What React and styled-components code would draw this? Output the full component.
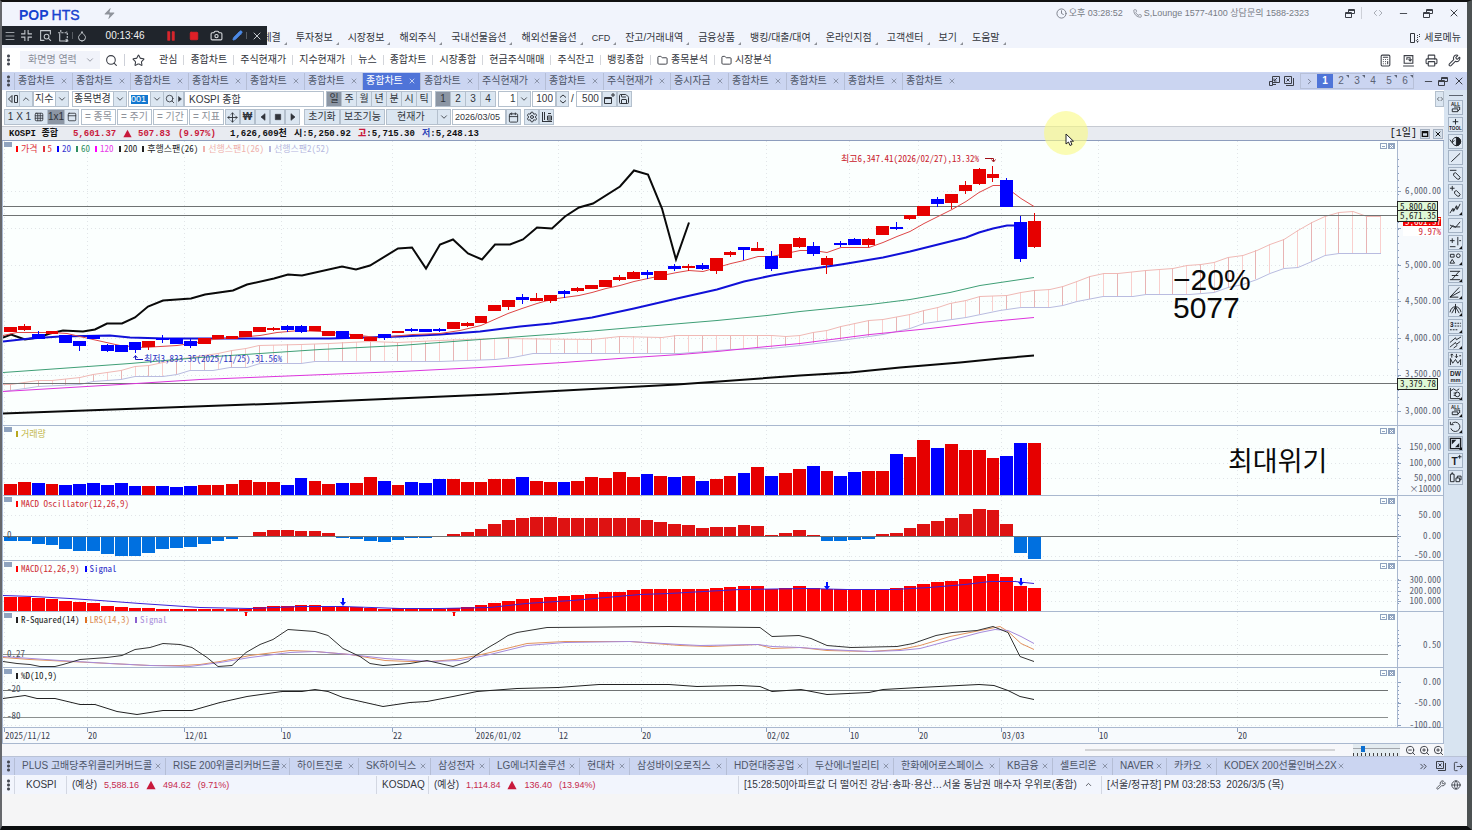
import React from "react";
import styled, { createGlobalStyle, css } from "styled-components";
import {
  Menu, Droplet, Camera, Pencil, X, Pause, Square, Zap, Clock, Phone,
  ChevronsLeftRight, ChevronDown, ChevronUp, ChevronRight, Search, Star, Folder, Calculator, Printer,
  Wrench, Save, Calendar, Settings, Move, ZoomIn, ZoomOut, ChevronsRight, LogOut, Globe, Minus,
  Grid3x3, PanelTop,
} from "lucide-react";

const ui = `"Liberation Sans", "Noto Sans CJK KR", sans-serif`;
const mono = `"Noto Sans Mono CJK KR", "Liberation Mono", "Noto Sans CJK KR", monospace`;

const Global = createGlobalStyle`
  * { box-sizing: border-box; }
  body { margin: 0; background: #111; }
  button, input, select { font: inherit; color: inherit; margin: 0; padding: 0; border: 0; background: none; border-radius: 0; }
  button { cursor: pointer; white-space: nowrap; }
  svg { display: block; flex: none; }
`;

const Page = styled.div`
  position: relative;
  display: flex;
  flex-direction: column;
  min-height: 100vh;
  overflow: hidden;
  border: 2px solid #111;
  border-left-color: #66686c;
  border-right: 5px solid #4c5152;
  border-bottom: 4px solid #0c0e10;
  background: #f5f5f6;
  color: #33363d;
  font-family: ${ui};
  font-size: 10px;
  line-height: 12px;
  white-space: nowrap;
`;

const Row = styled.div`
  display: flex;
  align-items: center;
  flex: none;
`;
const Spacer = styled.div`flex: 1;`;

/* title and menus */
const TitleBar = styled(Row).attrs({ as: "header" })`
  height: 24px;
  padding: 0 1px 2px 17px;
  background: #f1f4fc;
  color: #777b85;
`;
const Logo = styled.div`
  position: relative;
  display: flex;
  gap: 3px;
  margin-right: 23px;
  padding-top: 3px;
  color: #1743cf;
  font-size: 14px;
  line-height: 14px;
  b + span { -webkit-text-stroke: 0.4px #1743cf; }
  &::after {
    content: "";
    position: absolute;
    left: 12px;
    top: 9px;
    width: 6px;
    height: 2px;
    background: #f1f4fc;
    transform: rotate(-45deg);
  }
`;
const TitleNote = styled.span`
  display: flex;
  align-items: center;
  gap: 2px;
  margin-right: ${(p) => p.$gap}px;
  font-size: 9px;
`;
const IconButton = styled.button`
  display: flex;
  align-items: center;
  justify-content: center;
  width: ${(p) => p.$w || 25}px;
  height: 16px;
  margin-right: ${(p) => p.$mr || 0}px;
  color: ${(p) => p.$c || "#3b3e46"};
`;
const MenuBar = styled(Row).attrs({ as: "nav" })`
  height: 22px;
  gap: 15px;
  padding: 2px 6px 0 242px;
  background: #f1f4fc;
`;
const MenuItem = styled.button`
  position: relative;
  font-size: ${(p) => (p.$latin ? 9 : 10)}px;
  &::after {
    content: "";
    position: absolute;
    right: -6px;
    bottom: -1px;
    border: solid transparent;
    border-width: 0 0 3px 3px;
    border-bottom-color: #8d9097;
  }
`;
const SideMenuButton = styled.button`
  display: flex;
  align-items: center;
  gap: 3px;
`;
const Recorder = styled.div`
  position: absolute;
  z-index: 3;
  left: 0;
  top: 24px;
  display: flex;
  align-items: center;
  width: 265px;
  height: 19px;
  padding-left: 1px;
  background: #20252c;
  color: #c3c8cd;
  time { width: 68px; text-align: center; color: #f2f2f2; }
  i { width: 1px; height: 7px; background: #575c62; }
`;

/* favourites bar */
const FavBar = styled(Row)`
  height: 24px;
  padding: 0 1px 0 3px;
  background: #fff;
`;
const Grip = styled.span`
  width: 3px;
  height: 12px;
  margin: 0 ${(p) => p.$r}px 0 2px;
  background: radial-gradient(circle, #444852 1px, transparent 2px) 0 0 / 3px 4px;
`;
const ScreenSearch = styled.label`
  display: flex;
  align-items: center;
  width: 80px;
  height: 18px;
  margin-right: 5px;
  padding: 0 5px 0 8px;
  background: #f1f3fa;
  color: #898d98;
  input { width: 57px; outline: 0; }
  input::placeholder { color: #898d98; opacity: 1; }
`;
const FavItem = styled.button`
  display: flex;
  align-items: center;
  gap: 3px;
  height: 12px;
  padding: 0 6px;
  & + & { border-left: 1px solid #d3d5da; height: 10px; line-height: 10px; }
`;
const Divider = styled.span`
  width: 1px;
  height: 12px;
  margin: 0 ${(p) => p.$m}px;
  background: #cdd0d8;
`;

/* document tabs */
const TabBar = styled(Row)`
  height: ${(p) => p.$h || 18}px;
  padding-left: 3px;
  background: #cbd5f1;
  border-top: ${(p) => (p.$line ? "1px solid #b9c2d6" : "0")};
`;
const Tab = styled.div`
  display: flex;
  align-items: center;
  justify-content: space-between;
  flex: none;
  width: ${(p) => p.$w || 58}px;
  height: 17px;
  padding: 0 ${(p) => (p.$wide ? 3 : 4)}px 0 ${(p) => (p.$wide ? 7 : 3)}px;
  border-left: 1px solid #b5bed6;
  color: ${(p) => (p.$on ? "#fff" : "#4e5568")};
  background: ${(p) => (p.$on ? "#4f74d8" : "none")};
  svg { color: ${(p) => (p.$on ? "#fff" : "#6d7487")}; }
`;
const Desk = styled.button`
  position: relative;
  display: flex;
  align-items: center;
  justify-content: center;
  width: 16px;
  height: 14px;
  color: ${(p) => (p.$on ? "#fff" : "#5b6273")};
  background: ${(p) => (p.$on ? "#4f74d8" : "none")};
  font-weight: ${(p) => (p.$on ? 700 : 400)};
  ${(p) => p.$mark && css`
    &::after {
      content: "";
      position: absolute;
      right: 0;
      top: 1px;
      border: solid transparent;
      border-width: 3px 0 0 3px;
      border-top-color: #5b6273;
    }
  `}
`;
const DeskGroup = styled.div`
  display: flex;
  border: 1px solid #b7c0d8;
  margin: 0 7px 0 4px;
`;

/* chart window */
const Body = styled.main`
  display: flex;
  flex: none;
`;
const ChartWindow = styled.section`
  flex: 1;
  min-width: 0;
  background: #fff;
`;
const Tools = styled(Row)`
  height: 16px;
  margin-top: ${(p) => p.$top}px;
  padding-left: ${(p) => p.$left}px;
  gap: 1px;
`;
const Group = styled.div`
  display: flex;
  margin-right: ${(p) => p.$mr || 2}px;
`;
const ToolButton = styled.button`
  display: flex;
  align-items: center;
  justify-content: center;
  gap: 3px;
  width: ${(p) => p.$w || 15}px;
  height: 16px;
  border: 1px solid #b4c0cd;
  margin-left: -1px;
  background: ${(p) => (p.$on ? "#8c96a4" : p.$plain ? "#fff" : "#dbe6f1")};
  color: ${(p) => (p.$plain ? "#8d919a" : "#30343b")};
`;
const Field = styled.input`
  width: ${(p) => p.$w}px;
  height: 16px;
  padding: 0 ${(p) => p.$px || 4}px 1px;
  border: 1px solid #b4c0cd;
  background: #fff;
  text-align: ${(p) => p.$align || "left"};
`;
const CodeField = styled(Field)`
  background: linear-gradient(#1177d0, #1177d0) 2px 3px / 17px 9px no-repeat #fff;
  color: #fff;
  font-size: 9px;
`;
const DateField = styled(Field)`font-size: 9px;`;
const SelectBox = styled.span`
  position: relative;
  display: flex;
  width: ${(p) => p.$w}px;
  height: 16px;
  border: 1px solid #b4c0cd;
  background: linear-gradient(90deg, ${(p) => p.$bg || "#fff"} calc(100% - 13px), #b4c0cd 0, #b4c0cd calc(100% - 12px), #dbe6f1 0);
  select { appearance: none; width: 100%; padding-left: ${(p) => p.$pl || 1}px; outline: 0; }
  svg { position: absolute; right: 1px; top: 2px; pointer-events: none; }
`;
const Slash = styled.span`margin: 0 1px;`;

const Quote = styled(Row)`
  height: 15px;
  margin-top: 1px;
  padding: 0 1px 0 7px;
  gap: 6px;
  border-top: 1px solid #c6cad2;
  border-bottom: 1px solid #8d9dbd;
  background: #e8ebf1;
  color: #111;
  font-family: "Liberation Mono", "Noto Sans CJK KR", monospace;
  font-weight: 700;
  font-size: 9px;
  b { color: #c8193c; }
  em { font-style: normal; color: #2f46b8; }
`;
const QuotePart = styled.span`
  width: ${(p) => p.$w}px;
  color: ${(p) => (p.$up ? "#c8193c" : "#111")};
`;
const Period = styled.span`font-weight: 400; font-size: 10px;`;
const MiniButton = styled.button`
  display: flex;
  align-items: center;
  justify-content: center;
  width: 10px;
  height: 10px;
  margin-left: -3px;
  border: 1px solid #a4b0c0;
  background: #d5dfea;
`;

const Chart = styled.div`
  border-left: 1px solid #a9b8cf;
  border-right: 1px solid #a9b8cf;
`;
const Panel = styled.div`
  display: flex;
  height: ${(p) => p.$h}px;
  border-bottom: 1px solid #a9b8cf;
`;
const Plot = styled.div`
  position: relative;
  flex: 1;
  min-width: 0;
  background: #fbfffe;
  > svg { width: 100%; height: 100%; }
`;
const AxisBox = styled.div`
  width: 46px;
  flex: none;
  border-left: 1px solid #a9b8cf;
  background: #f7fafd;
  svg { width: 100%; height: 100%; overflow: visible; }
  text { font: 9px ${mono}; fill: #5a6070; text-anchor: end; }
`;
const Legend = styled.div`
  position: absolute;
  left: 13px;
  top: 2px;
  display: flex;
  gap: 5px;
  font: 9px/12px ${mono};
`;
const LegendItem = styled.span`
  display: flex;
  align-items: center;
  gap: 3px;
  color: ${(p) => p.$c};
  &::before { content: ""; width: 2px; height: 6px; background: ${(p) => p.$m || p.$c}; }
`;
const Fold = styled.button`
  position: absolute;
  left: 1px;
  top: 1px;
  width: 8px;
  height: 5px;
  background: #8fa3bf;
`;
const PanelButtons = styled.div`
  position: absolute;
  right: 2px;
  top: 2px;
  display: flex;
  gap: 1px;
  button { display: flex; align-items: center; justify-content: center; width: 7px; height: 6px; border: 1px solid #8fa3bf; color: #8fa3bf; }
  button + button { background: #8fa3bf; color: #fff; }
`;
const Level = styled.span`
  position: absolute;
  left: 4px;
  top: ${(p) => p.$y}px;
  font: 9px/12px ${mono};
  color: #4e535e;
`;
const Note = styled.span`
  position: absolute;
  left: ${(p) => p.$x}%;
  top: ${(p) => p.$y}px;
  font: 9px/12px ${mono};
  color: ${(p) => p.$c};
`;
const Memo = styled.div`
  position: absolute;
  left: ${(p) => p.$x}%;
  top: ${(p) => p.$y}px;
  font: ${(p) => p.$s}px/28px ${ui};
  color: #0a0a0a;
`;
const DateAxis = styled.div`
  height: 16px;
  background: #f7fafd;
  border-bottom: 1px solid #a9b8cf;
  padding-right: 46px;
  svg { width: 100%; height: 15px; }
  text { font: 9px ${mono}; fill: #3c4250; }
`;
const ScrollRow = styled(Row)`
  height: 12px;
  background: #f6f7fa;
  justify-content: flex-end;
  gap: 3px;
`;
const Track = styled.div`
  width: 250px;
  height: 2px;
  margin-right: 15px;
  background: #d2d3d6;
`;
const ZoomRange = styled.input.attrs({ type: "range" })`
  appearance: none;
  width: 47px;
  height: 12px;
  margin-right: 2px;
  background:
    linear-gradient(#a3a7ad, #a3a7ad) 0 4px / 100% 1px no-repeat,
    repeating-linear-gradient(90deg, #444 0 1px, transparent 1px 4px) 0 9px / 100% 3px no-repeat,
    #e3ebf0;
  &::-webkit-slider-thumb { appearance: none; width: 4px; height: 6px; margin-top: -3px; background: #0b6fd0; }
`;

/* drawing tools */
const SideTools = styled.aside`
  display: flex;
  flex-direction: column;
  align-items: center;
  width: 23px;
  flex: none;
  padding-top: 5px;
  background: #d8e4f1;
  hr { width: 14px; height: 1px; margin: 0 0 4px; border: 0; background: #5c6470; }
`;
const ToolStack = styled.div`
  display: flex;
  flex-direction: column;
  justify-content: space-between;
  height: 385px;
`;
const DrawTool = styled.button`
  position: relative;
  width: 15px;
  height: 15px;
  border: 1px solid #a3b2c4;
  background: #dfe9f4;
  svg { width: 13px; height: 13px; }
  ${(p) => p.$more && css`
    &::after {
      content: "";
      position: absolute;
      right: 0;
      bottom: 0;
      border: solid transparent;
      border-width: 0 0 3px 3px;
      border-bottom-color: #111;
    }
  `}
`;

/* status */
const Status = styled(Row).attrs({ as: "footer" })`
  height: 19px;
  padding: 0 4px 0 3px;
  background: #f2f5fd;
`;
const Cell = styled.div`
  display: flex;
  align-items: center;
  gap: 7px;
  width: ${(p) => p.$w}px;
  height: 18px;
  padding-left: ${(p) => p.$pl || 5}px;
  border-left: 1px solid #d3d7e2;
`;
const Up = styled.span`font-size: 9px; color: #c62a4d;`;
const Pointer = styled.div`
  position: absolute;
  z-index: 4;
  left: 1042px;
  top: 109px;
  width: 44px;
  height: 44px;
  border-radius: 50%;
  background: rgba(250, 250, 130, 0.6);
  svg { margin: 22px 0 0 21px; }
`;

/* ---- data ---- */
const LEFT = 3;
const WIDTH = 1394;
const bx = (i) => 10.5 + i * 13.838;
const RED = "#e60000";
const BLUE = "#0000ff";

/* colour, body top, body bottom, high, low */
const candles = [
  "r327,331", "r326,329,324,330", "b334,338,331,338", "r331,333", "b335,342", "b341,345,341,350", "b335,338", "b345,350,344,351",
  "b345,351", "b342,349,342,352", "r341,346,341,349", "b338,339,335,342", "b338,343", "b341,345,339,347", "r338,343", "r335,338",
  "r336,338", "r331,336", "r327,331", "r328,329,327,330", "b326,329,325,331", "b326,331,325,332", "r326,330", "r331,335",
  "b331,338", "r334,338", "r337,340", "b334,337,334,339", "r331,332", "b329,330,328,331", "b329,331", "b329,330,328,331",
  "r322,328", "r323,325,322,326", "r316,322", "r305,310", "r300,306,300,309", "b297,299,294,303", "r298,300,293,300", "r295,300,295,302",
  "b291,293,290,297", "r288,290,287,291", "r285,288", "r280,286", "r277,279,275,280", "r272,278,271,278", "b272,274,270,278", "r271,279",
  "b266,268,264,270", "r266,267,264,270", "b265,268,263,269", "r258,270,258,273", "r252,254,251,256", "b247,249,247,259", "r248,250,242,250", "b256,268,251,270",
  "r244,257", "r238,246,237,247", "b246,253,242,255", "r258,264,256,273", "b243,244,241,246", "b239,244,238,244", "r239,244,238,246", "r226,234",
  "b227,228,222,229", "r215,218,215,219", "r206,215", "b199,203,197,206", "r194,202,194,208", "r185,190,181,193", "r169,183,168,184", "r174,177,166,181",
  "b180,206,178,206", "b222,258,216,261", "r221,246,213,247",
].map((s) => {
  const [top, bottom, hi, lo] = s.slice(1).split(",").map(Number);
  return { color: s[0] === "r" ? RED : BLUE, top, bottom, hi: hi ?? top, lo: lo ?? bottom };
});

const volume = [
  484, 482, 483, 484, 485, 484, 483, 485, 483, 486, 486, 486, 487, 486, 485, 485, 484, 480, 482, 482, 485, 478, 481, 484, 483, 483, 477, 481, 485, 482, 483, 479, 479, 482, 482,
  479, 479, 477, 481, 482, 482, 481, 477, 478, 472, 477, 474, 476, 477, 476, 481, 479, 476, 473, 467, 476, 473, 469, 466, 471, 476, 472, 471, 471, 454, 457, 440, 448, 444, 450, 450, 458, 456, 443, 443,
];
const oscillator = [
  541, 541, 544, 545, 549, 551, 551, 554, 556, 556, 553, 549, 548, 547, 544, 541, 539, 536, 532, 530, 530, 531, 531, 533, 538, 539, 541, 542, 540, 538, 538, 537, 534, 532, 529,
  524, 520, 518, 517, 517, 518, 518, 518, 518, 518, 518, 520, 522, 524, 525, 528, 527, 527, 525, 526, 535, 533, 530, 535, 541, 541, 540, 539, 534, 533, 528, 524, 521, 518, 514, 509, 510, 524, 553, 559,
];
const macd = [
  597, 597, 598, 599, 601, 602, 603, 606, 607, 608, 608, 609, 609, 609, 609, 609, 609, 609, 607, 606, 606, 605, 605, 606, 607, 607, 608, 609, 608, 608, 608, 609, 608, 607, 605,
  603, 601, 599, 598, 597, 596, 595, 594, 592, 592, 590, 589, 589, 589, 589, 589, 588, 587, 586, 586, 589, 588, 586, 588, 589, 589, 589, 589, 589, 588, 586, 584, 582, 581, 579, 576, 574, 577, 586, 588,
];

const lines = {
  ma5: "3,335 17,332 33,332 53,332 67,333 93,339 120,345 143,347 177,345 197,342 213,339 237,337 260,335 277,332 300,330 320,331 343,333 360,335 377,337 390,336 413,334 440,333 460,330 481,325 508,313 522,308 537,303 551,299 564,297 579,295 592,292 606,288 620,285 634,281 648,278 662,275 677,272 689,270 703,271 717,267 731,263 744,260 758,256 772,256 786,253 800,250 813,250 827,252 841,247 869,247 883,242 897,236 910,231 924,223 938,216 952,209 966,201 979,192 993,185 1002,185 1013,192 1021,198 1034,206",
  ma20: "3,341 30,338 60,336 110,335 130,337 165,338 230,338 300,338 330,338 400,336 440,334 480,331 520,326 551,323 592,317 634,308 677,298 717,289 744,281 772,275 800,270 841,264 883,257 910,251 938,244 966,237 979,232 993,228 1007,225 1027,225",
  ma60: "3,372 60,368 130,363 200,357 260,353 320,349 400,345 480,339 563,333 633,327 717,320 767,315 800,311 870,304 910,299 950,292 980,285 1007,281 1034,277",
  ma120: "3,391 120,384 200,379 300,375 400,371 480,367 563,362 633,357 680,354 717,351 757,347 800,343 870,334 930,328 980,322 1034,317",
  ma200: "3,413 140,408 280,403 350,400 420,397 490,394 677,384 800,375 850,372 900,367 960,362 1000,358 1034,355",
  lagging: "3,337 11,334 25,339 38,337 50,333 63,330 83,331 95,329 107,323 122,323 135,317 148,306 163,300 191,298 205,294 233,290 247,284 274,278 288,274 302,275 342,266 356,269 370,265 398,248 412,247 426,268 440,244 453,239 468,253 482,259 495,244 510,244 523,239 537,227 552,228 565,216 579,207 593,203 620,186 634,170 648,174 662,208 676,259 689,222",
  spanA: "3,384 11,384 24,382 38,380 52,380 80,377 93,374 121,370 135,366 149,365 163,362 177,359 218,353 232,350 246,348 259,345 301,344 329,343 370,341 398,342 439,340 467,339 495,338 592,339 620,336 662,337 677,335 772,335 786,336 800,335 813,332 827,330 841,326 855,323 869,320 883,319 910,314 924,310 938,307 950,303 966,300 980,296 1007,295 1021,292 1034,290 1050,289 1063,286 1077,281 1090,276 1104,273 1118,273 1146,270 1173,268 1187,265 1201,264 1214,262 1228,257 1243,255 1257,250 1270,244 1284,239 1298,230 1312,222 1325,216 1339,212 1353,211 1367,216 1381,216",
  spanB: "3,391 25,388 38,386 80,384 93,381 121,379 135,376 163,376 177,374 190,370 213,370 230,367 247,367 260,363 301,363 315,361 440,361 467,360 495,359 513,357 533,353 680,353 730,349 770,348 800,345 841,340 883,334 910,328 924,323 966,317 1000,310 1021,307 1050,307 1063,305 1077,301 1103,296 1133,296 1146,294 1190,294 1214,292 1228,287 1243,284 1257,279 1270,273 1284,268 1298,267 1312,261 1325,255 1339,253 1381,253",
  macdSignal: "3,595 33,596 70,598 100,600 140,603 170,605 200,607 250,608 300,606 343,606 400,608 440,608 490,607 526,603 572,600 640,594 669,593 704,591 740,589 808,588 847,589 894,589 929,587 965,584 990,581 1015,581 1034,583",
  rsq: "3,661 17,663 30,664 40,666 55,666 63,664 80,659 107,657 122,655 135,649 150,647 163,643 180,644 192,647 207,657 218,666 232,665 246,652 260,644 273,639 288,629 315,631 328,635 343,648 360,656 370,663 383,665 410,663 427,660 453,666 468,661 477,654 490,646 497,642 508,635 517,632 547,627 669,626 760,627 772,636 799,635 811,638 827,645 851,647 897,646 913,643 936,635 952,632 977,630 993,626 1008,632 1020,656 1034,661",
  lrs: "3,657 30,659 70,661 110,663 150,665 180,665 200,664 220,661 250,655 290,650 315,651 350,654 385,660 410,661 430,661 455,659 477,655 490,652 527,643 565,641 630,641 680,645 710,646 758,644 772,648 800,647 827,650 870,651 900,649 920,645 950,636 980,630 1000,626 1008,631 1021,643 1034,649",
  lrsSignal: "3,656 60,660 110,663 150,665 190,666 220,662 250,657 290,652 315,651 350,654 385,658 430,661 460,660 490,654 527,645 565,642 630,641 680,644 700,645 758,644 772,646 800,647 827,649 870,651 900,650 920,648 950,640 980,632 995,629 1008,630 1021,636 1034,643",
  percentD: "3,698 25,695 37,698 55,698 80,704 95,704 117,711 137,714 163,710 192,710 220,702 247,696 282,691 302,691 315,689 328,691 343,697 383,706 410,702 427,701 453,696 477,691 490,690 517,688 558,687 599,684 669,684 697,686 740,685 760,686 772,691 801,689 827,694 869,692 883,689 919,687 979,684 994,685 1008,690 1020,696 1034,699",
};

const toPoints = (s) => s.split(" ").map((p) => p.split(",").map(Number));
const valueAt = (s, x) => {
  const pts = toPoints(s);
  const k = pts.findIndex((p) => p[0] >= x);
  if (k <= 0) return pts[k === 0 ? 0 : pts.length - 1][1];
  const [x0, y0] = pts[k - 1];
  const [x1, y1] = pts[k];
  return y0 + ((y1 - y0) * (x - x0)) / (x1 - x0);
};

const dates = [[4, "2025/11/12"], [87, "20"], [184, "12/01"], [281, "10"], [392, "22"], [475, "2026/01/02"], [558, "12"], [641, "20"], [766, "02/02"], [849, "10"], [918, "20"], [1001, "03/03"], [1098, "10"], [1237, "20"]];

/* ---- chart pieces ---- */
const Line = ({ d, c, w = 1 }) => (
  <polyline points={d} transform="translate(0 .5)" fill="none" stroke={c} strokeWidth={w} vectorEffect="non-scaling-stroke" />
);
const HLine = ({ y, to = 1397, c = "#6f7373" }) => <rect x={LEFT} y={y} width={to - LEFT} height="1" fill={c} />;

function PanelView({ top, h, legend, grid = [], labels = [], minor = 5, children, overlay, axis }) {
  return (
    <Panel $h={h}>
      <Plot>
        <svg viewBox={`${LEFT} ${top} ${WIDTH} ${h - 1}`} preserveAspectRatio="none">
          <g stroke="#e1e5e8" strokeDasharray="1 3" shapeRendering="crispEdges">
            {dates.map(([x]) => <line key={x} x1={x + 0.5} x2={x + 0.5} y1={top} y2={top + h} />)}
            {grid.map((y) => <line key={y} x1={LEFT} x2="1397" y1={y + 0.5} y2={y + 0.5} />)}
          </g>
          {children}
        </svg>
        <Fold aria-label="접기" />
        <Legend>{legend.map(([t, c, m]) => <LegendItem key={t} $c={c} $m={m}>{t}</LegendItem>)}</Legend>
        {overlay}
        <PanelButtons>
          <button aria-label="최소화"><svg width="3" height="1"><rect width="3" height="1" fill="currentColor" /></svg></button>
          <button aria-label="닫기"><svg width="3" height="3"><path d="M0 0L3 3M3 0L0 3" stroke="currentColor" /></svg></button>
        </PanelButtons>
      </Plot>
      <AxisBox>
        <svg viewBox={`1398 ${top} 45 ${h - 1}`}>
          <g fill="#8ba0bf">
            {grid.map((y) => <rect key={y} x="1398" y={y} width="3" height="1" />)}
            {Array.from({ length: Math.floor((h - 22) / minor) }, (_, k) => (
              <rect key={k} x="1398" y={top + 18 + k * minor} width="1" height="1" />
            ))}
          </g>
          {labels.map(([y, t]) => <text key={t} x="1441" y={y + 3}>{t}</text>)}
          {axis}
        </svg>
      </AxisBox>
    </Panel>
  );
}

const Tag = ({ y, t }) => (
  <g>
    <rect x="1397.5" y={y + 0.5} width="40" height="11" fill="#dff8d6" stroke="#222" />
    <text x="1436" y={y + 9} style={{ fill: "#222" }}>{t}</text>
  </g>
);

const Bars = ({ data, base, color, w = 12.8 }) =>
  data.map((y, i) => (
    <rect key={i} x={bx(i) - w / 2} y={Math.min(y, base)} width={w} height={Math.max(1, Math.abs(base - y))} fill={color(i, y)} />
  ));

const DownArrow = ({ x, y }) => <path d={`M${x - 1} ${y - 4}h2v4h2l-3 4l-3-4h2z`} fill="#0010ff" />;
const UpMark = ({ x }) => <path d={`M${x - 3} 611h6l-2 2v3h-2v-3z`} fill="#f00" />;

function Charts() {
  const cloudX = Array.from({ length: 100 }, (_, i) => bx(i)).filter((x) => x < 1383);
  const pct = (x) => ((x - LEFT) / WIDTH) * 100;
  return (
    <Chart>
      <PanelView
        top={141} h={285} minor={7}
        legend={[["가격", "#e0303a", "#f00"], ["5", "#e0303a"], ["20", "#3434d0", "#00f"], ["60", "#2f8f63"], ["120", "#e93be9", "#f0f"], ["200", "#222"], ["후행스팬(26)", "#222"], ["선행스팬1(26)", "#efb1ac"], ["선행스팬2(52)", "#b6b8df"]]}
        grid={[191, 228, 265, 301, 338, 375, 411]}
        labels={[[191, "6,000.00"], [265, "5,000.00"], [301, "4,500.00"], [338, "4,000.00"], [374, "3,500.00"], [411, "3,000.00"]]}
        axis={
          <>
            <rect x="1403" y="217" width="38" height="9" fill="#f00000" />
            <text x="1441" y="225" style={{ fill: "#fff" }}>5,601.37</text>
            <rect x="1403" y="226" width="38" height="10" fill="#fff" />
            <text x="1441" y="235" style={{ fill: "#d02030" }}>9.97%</text>
            <Tag y={201} t="5,800.60" />
            <Tag y={210} t="5,671.35" />
            <Tag y={378} t="3,379.78" />
          </>
        }
        overlay={
          <>
            <Note $x={pct(841)} $y={12} $c="#c9202c">최고6,347.41(2026/02/27),13.32%</Note>
            <Note $x={pct(144)} $y={212} $c="#2f37c4">최저3,833.35(2025/11/25),31.56%</Note>
            <Memo $x={pct(1173)} $y={125} $s={30}>−20%<br />5077</Memo>
          </>
        }
      >
        <g shapeRendering="crispEdges">
          {cloudX.map((x, i) => (
            <line key={x} x1={x} x2={x} y1={valueAt(lines.spanA, x)} y2={valueAt(lines.spanB, x)} stroke={i % 2 ? "#f9cfcd" : "#e8b4b4"} />
          ))}
        </g>
        <Line d={lines.spanA} c="#f0b9b5" />
        <Line d={lines.spanB} c="#b9bce0" />
        <HLine y={206} /><HLine y={215} /><HLine y={383} />
        <Line d={lines.ma60} c="#3f9f76" />
        <Line d={lines.ma120} c="#dd35dd" />
        <Line d={lines.ma200} c="#0a0a0a" w={2} />
        <Line d={lines.lagging} c="#0a0a0a" w={2} />
        <Line d={lines.ma20} c="#1111d8" w={2} />
        <Line d={lines.ma5} c="#de4646" />
        <g shapeRendering="crispEdges">
          {candles.map((k, i) => (
            <g key={i} fill={k.color}>
              <rect x={bx(i) - 0.5} y={k.hi} width="1" height={k.lo - k.hi + 1} />
              <rect x={bx(i) - 6.4} y={k.top} width="12.8" height={Math.max(1, k.bottom - k.top + 1)} />
            </g>
          ))}
        </g>
        <path d="M985 158.500H993.500V161M991.500 159.500L993.500 162L995.500 159.500" fill="none" stroke="#a01018" />
        <path d="M143 359.500H135.500V356M133.500 358L135.500 355.500L137.500 358" fill="none" stroke="#1818c0" />
      </PanelView>

      <PanelView top={426} h={70} minor={3} legend={[["거래량", "#c3b84c", "#b9a81e"]]} grid={[448, 463, 478]}
        labels={[[447, "150,000"], [463, "100,000"], [478, "50,000"], [489, "×10000"]]}
        overlay={<Memo $x={pct(1228)} $y={22} $s={27}>최대위기</Memo>}>
        <g shapeRendering="crispEdges"><Bars data={volume} base={495} color={(i) => candles[i].color} /></g>
      </PanelView>

      <PanelView top={496} h={65} minor={4} legend={[["MACD Oscillator(12,26,9)", "#cf2f37", "#f00"]]} grid={[515, 536, 556]}
        labels={[[515, "50.00"], [536, "0.00"], [555, "-50.00"]]} overlay={<Level $y={33}>0</Level>}>
        <g shapeRendering="crispEdges"><Bars data={oscillator} base={536} color={(i, y) => (y <= 536 ? "#de1212" : "#0070e0")} /></g>
        <HLine y={536} />
      </PanelView>

      <PanelView top={561} h={51} minor={4} legend={[["MACD(12,26,9)", "#cf2f37", "#f00"], ["Signal", "#2a2ac8", "#00f"]]} grid={[580, 591, 601]}
        labels={[[580, "300.000"], [591, "200.000"], [601, "100.000"]]}>
        <g shapeRendering="crispEdges"><Bars data={macd} base={611} color={() => "#fe0000"} /></g>
        <Line d={lines.macdSignal} c="#3c22d8" />
        <DownArrow x={343} y={602} /><DownArrow x={827} y={586} /><DownArrow x={1021} y={582} />
      </PanelView>

      <PanelView top={612} h={56} minor={4} legend={[["R-Squared(14)", "#222"], ["LRS(14,3)", "#dd8d55", "#e07020"], ["Signal", "#a98fdb", "#8a60d0"]]}
        grid={[645]} labels={[[645, "0.50"]]} overlay={<Level $y={36}>0.27</Level>}>
        <UpMark x={246} /><UpMark x={454} />
        <HLine y={654} to={1388} c="#8b908f" />
        <Line d={lines.lrs} c="#e3935f" />
        <Line d={lines.lrsSignal} c="#a68bdc" />
        <Line d={lines.rsq} c="#333" />
      </PanelView>

      <PanelView top={668} h={60} minor={4} legend={[["%D(10,9)", "#222"]]} grid={[682, 703, 725]}
        labels={[[682, "0.00"], [703, "-50.00"], [725, "-100.00"]]}
        overlay={<><Level $y={15}>-20</Level><Level $y={42}>-80</Level></>}>
        <HLine y={690} to={1388} /><HLine y={717} to={1388} c="#8b908f" />
        <Line d={lines.percentD} c="#222" />
      </PanelView>

      <DateAxis>
        <svg>
          {dates.map(([x, t]) => (
            <g key={x}>
              <rect x={`${pct(x)}%`} y="0" width="1" height="4" fill="#8ba0bf" />
              <text x={`${pct(x + 1)}%`} y="11">{t}</text>
            </g>
          ))}
        </svg>
      </DateAxis>
    </Chart>
  );
}

/* ---- icons ---- */
const S = ({ s = 12, children, w = 1, ...r }) => (
  <svg width={s} height={s} viewBox="0 0 12 12" fill="none" stroke="currentColor" strokeWidth={w} {...r}>{children}</svg>
);
const Restore = () => <S><path d="M1.500 5.500h6v5h-6zM1.500 6.500h6M4.500 5V2.500h6v4H8M4.500 3.500h6" /></S>;
const PanIcon = () => <S><path d="M5 2.500L1.500 6L5 9.500zM7.500 2.500h3v7h-3z" /></S>;
const Boxed = () => <S><path d="M1.500 1.500h7v7h-7zM3.500 3.500l3 3M6.500 3.500l-3 3M10.500 3v7.500H3" /></S>;
const Dock = () => <S><path d="M4.500 1.500h7v6h-7zM9 3L6 6M6 3.500V6h2.500M1.500 6.500h3v4h-3zM4 9.500h4" /></S>;
const NewWin = () => <S><path d="M1.500 4.500h7v6h-7zM1.500 5.500h7M10 0v4M8 2h4" /></S>;
const ChartMini = () => <S><path d="M1.500 1v9.500M3.500 1v8M1 10.500h10M6.500 5h4v4h-4zM6.500 7h4M7 2.500h3" /></S>;
const Screen = () => <S s={13}><path d="M2 1.500h8v7H2zM1 11h10M4.500 5.500V3.500h3v2M6 5l1.500 1.500L9 5" /></S>;
const SearchBox = () => <S s={13}><path d="M5 10.500H1.500v-9h9V5" /><circle cx="7" cy="7" r="2.200" /><path d="M8.500 8.500L11 11" /></S>;
const Region = () => <S s={13}><path d="M1 3.500h8V2M3.500 1v3M9.500 3.500v7" strokeDasharray="2 1" /><path d="M2.500 4v7h7M8 9.500l2 1.500l-2 1" /></S>;
const Collapse = () => <S s={13}><path d="M4.500 1v3.500H1M7.500 1v3.500H11M4.500 11V7.500H1M7.500 11V7.500H11" /></S>;
const Vertical = () => <S><path d="M1.500 1.500h4v9h-4z" /><path d="M8.500 3v7M7 8l1.500 2.500L10 8M10.500 2v4" strokeDasharray="1 1" /></S>;
const UpTriangle = ({ s = 10 }) => <S s={s}><path d="M6 1L11.500 11H.5z" fill="#c8193c" stroke="none" /></S>;

const G = ({ children, w = 1 }) => <svg viewBox="0 0 14 14" fill="none" stroke="#1c2026" strokeWidth={w}>{children}</svg>;
const T = ({ x = 7, y, s = 5, children }) => (
  <text x={x} y={y} fontSize={s} fontWeight="700" textAnchor="middle" fill="#1c2026" stroke="none">{children}</text>
);
const Stack = () => <G><T y="5">ALL</T><path d="M5.500 6.500h6v3M3.500 8.500h6v3h-6zM9.500 11l2-2" /></G>;
const drawTools = [
  [<Stack />], [<G><T y="13">TOOL</T><path d="M7 1v6M4 4h6" /></G>],
  [<G><circle cx="8" cy="7" r="4.500" /><path d="M8 2.500a4.500 4.500 0 0 1 0 9z" fill="#1c2026" /><path d="M1 5l2 3l3-2" /></G>],
  [<G><path d="M2.500 11.500L12 2.500" /></G>],
  [<G><path d="M1 2.500h7M5 6l2-1l5 5l-1 2l-2 0l-4-4z" /></G>],
  [<G><path d="M1 3.500h5M3.500 1v5M6 7l2-1l4 4l-1 2h-2l-3-3z" /></G>],
  [<G><path d="M1 12l3-5l1 3l3-6l1 4l3-6M4 10l1-3M8 8l1-3" /></G>, 1],
  [<G><path d="M1 11l3-4l3 2l5-6M1 6.500l4 2l7 0" /></G>],
  [<G><path d="M1 5h5M3.500 2.500v5M9.500 1v9M11 5h2M1 11.500h6" /></G>, 1],
  [<G><path d="M1.500 2.500h4v3h-4zM3.500 8L6 12H1z" /><circle cx="10" cy="4" r="2" /></G>, 1],
  [<G><path d="M1 2.500h11M3 7h7M1 11.500h11M11 2.500L3 11.500" /></G>, 1],
  [<G><path d="M1 12L11 1.500M1 12l11-6M1 12h9" /></G>, 1],
  [<G><path d="M1 10c1-4 3-6 6-6s5 2 6 6M7 1v10M7 4l-4 7M7 4l4 7" /></G>, 1],
  [<G><T x="3" y="7" s="7">3</T><path d="M6 3.500h7M6 6.500h7M1 10.500h9" strokeDasharray="2 1" /></G>, 1],
  [<G><path d="M1 7l6-5l1 2l5-3M1 12l6-5l1 2l4-3M5 13l4-3" /></G>, 1],
  [<G><path d="M1.500 13V6l2.500 5l3-4l2.500 4l3-4v6M3 5V1M1.500 2.500L3 1l1.500 1.500M8 1v4M6.500 3.500L8 5l1.500-1.500M11 3h2" /></G>],
  [<G><T y="6" s="7">DW</T><T y="12.500" s="6">mm</T></G>],
  [<G><path d="M1.500 1v11.500H12M2 4l3-2l3 2l3-2M5 6.500h3M5 9h2" /><circle cx="9" cy="8" r="2.500" /></G>, 1],
  [<Stack />, 1],
  [<G><path d="M3 4a5 5 0 1 1-1 5M1.500 2v3h3.500" /></G>, 1],
  [<G><path d="M1.500 1.500h11v11h-11z" strokeWidth="1.500" /><path d="M3 3h5L3 8zM11 11V6.500L6.500 11z" fill="#1c2026" stroke="none" /></G>, 1],
  [<G><T x="6" y="12" s="11">T</T><path d="M11.500 1v4M9.500 3h4" /></G>],
  [<G><path d="M1.500 11.500v-8h1.500v-1.500h1v1.500h1.500v8zM7.500 7.500h4v4h-4zM9 7.500V5.500h4v4h-1.500" /></G>],
];

const Select = ({ w, value, bg, pl, label }) => (
  <SelectBox $w={w} $bg={bg} $pl={pl}>
    <select aria-label={label} defaultValue={value}><option>{value}</option></select>
    <ChevronDown size={10} />
  </SelectBox>
);

const topTabs = ["종합차트", "종합차트", "종합차트", "종합차트", "종합차트", "종합차트", "종합차트", "종합차트", "주식현재가", "종합차트", "주식현재가", "증시자금", "종합차트", "종합차트", "종합차트", "종합차트"];
const menus = ["주식체결", "투자정보", "시장정보", "해외주식", "국내선물옵션", "해외선물옵션", "CFD", "잔고/거래내역", "금융상품", "뱅킹/대출/대여", "온라인지점", "고객센터", "보기", "도움말"];
const favs = ["관심", "종합차트", "주식현재가", "지수현재가", "뉴스", "종합차트", "시장종합", "현금주식매매", "주식잔고", "뱅킹종합"];
const stockTabs = [["PLUS 고배당주위클리커버드콜", 151], ["RISE 200위클리커버드콜", 124], ["하이트진로", 69], ["SK하이닉스", 72], ["삼성전자", 59], ["LG에너지솔루션", 90], ["현대차", 50], ["삼성바이오로직스", 97], ["HD현대중공업", 81], ["두산에너빌리티", 86], ["한화에어로스페이스", 106], ["KB금융", 53], ["셀트리온", 60], ["NAVER", 54], ["카카오", 50], ["KODEX 200선물인버스2X", 132]];

export default function App() {
  return (
    <Page>
      <Global />
      <TitleBar>
        <Logo><b>POP</b><span>HTS</span></Logo>
        <Zap size={13} fill="#8f939b" strokeWidth={0} />
        <Spacer />
        <TitleNote $gap={10}><Clock size={11} /> 오후 03:28:52</TitleNote>
        <TitleNote $gap={32}><Phone size={9} /> S,Lounge 1577-4100 상담문의 1588-2323</TitleNote>
        <IconButton $w={18} aria-label="창 복원"><Restore /></IconButton>
        <Divider $m={2} />
        <IconButton $w={28} $c="#a9adb6" aria-label="확장"><ChevronsLeftRight size={12} /></IconButton>
        <IconButton $w={22} aria-label="최소화"><Minus size={11} /></IconButton>
        <IconButton $w={28} aria-label="최대화"><Restore /></IconButton>
        <IconButton $w={24} aria-label="닫기"><X size={12} /></IconButton>
      </TitleBar>
      <MenuBar>
        {menus.map((m) => <MenuItem key={m} $latin={m === "CFD"}>{m}</MenuItem>)}
        <Spacer />
        <SideMenuButton><Vertical /> 세로메뉴</SideMenuButton>
      </MenuBar>
      <Recorder>
        <IconButton $w={14} $c="#c3c8cd" aria-label="메뉴"><Menu size={12} strokeWidth={1.500} /></IconButton>
        <IconButton $w={20} $c="#c3c8cd" aria-label="접기"><Collapse /></IconButton>
        <IconButton $w={18} $c="#c3c8cd" aria-label="영역 확대"><SearchBox /></IconButton>
        <IconButton $w={18} $c="#c3c8cd" aria-label="영역 선택"><Region /></IconButton>
        <i />
        <IconButton $w={18} $c="#c3c8cd" aria-label="효과"><Droplet size={12} /></IconButton>
        <time>00:13:46</time>
        <IconButton $w={24} $c="#c8262c" aria-label="일시정지"><Pause size={12} fill="#d8262c" strokeWidth={1} /></IconButton>
        <IconButton $w={22} $c="#e02027" aria-label="정지"><Square size={10} fill="#e02027" /></IconButton>
        <IconButton $w={24} $c="#d7dade" aria-label="캡처"><Camera size={13} /></IconButton>
        <IconButton $w={18} $c="#4d8be8" aria-label="그리기"><Pencil size={11} fill="#4d8be8" /></IconButton>
        <i />
        <IconButton $w={20} $c="#c3c8cd" aria-label="닫기"><X size={12} /></IconButton>
      </Recorder>
      <FavBar>
        <Grip $r={10} />
        <ScreenSearch><input placeholder="화면명 엽력" aria-label="화면명 입력" /><ChevronDown size={10} /></ScreenSearch>
        <IconButton $w={13} aria-label="검색"><Search size={13} /></IconButton>
        <Divider $m={6} />
        <IconButton $w={14} $mr={8} aria-label="즐겨찾기"><Star size={13} /></IconButton>
        {favs.map((f, i) => <FavItem key={i}>{f}</FavItem>)}
        <FavItem><Folder size={11} /> 종목분석</FavItem>
        <FavItem><Folder size={11} /> 시장분석</FavItem>
        <Spacer />
        <IconButton $w={23} aria-label="계산기"><Calculator size={13} /></IconButton>
        <IconButton $w={23} aria-label="새로고침"><Screen /></IconButton>
        <IconButton $w={23} aria-label="인쇄"><Printer size={13} /></IconButton>
        <IconButton $w={23} aria-label="설정"><Wrench size={13} /></IconButton>
      </FavBar>
      <TabBar>
        <Grip $r={4} />
        {topTabs.map((t, i) => (
          <Tab key={i} $on={i === 6} $w={t.length === 5 ? 67 : 58}><button>{t}</button><button aria-label="탭 닫기"><X size={8} /></button></Tab>
        ))}
        <Spacer />
        <IconButton $w={15} aria-label="도킹"><Dock /></IconButton>
        <IconButton $w={15} aria-label="모두 닫기"><Boxed /></IconButton>
        <DeskGroup>
          <Desk aria-label="다음"><ChevronRight size={9} /></Desk>
          {[1, 2, 3, 4, 5, 6].map((n) => <Desk key={n} $on={n === 1} $mark={n > 1 && n !== 4}>{n}</Desk>)}
        </DeskGroup>
        <IconButton $w={14} aria-label="최소화"><Minus size={11} /></IconButton>
        <IconButton $w={16} aria-label="복원"><Restore /></IconButton>
        <IconButton $w={16} aria-label="닫기"><X size={12} /></IconButton>
      </TabBar>

      <Body>
        <ChartWindow>
          <Tools $top={1} $left={5}>
            <Group>
              <ToolButton $w={14} aria-label="이동"><PanIcon /></ToolButton>
              <ToolButton $w={14} aria-label="위로"><ChevronUp size={10} /></ToolButton>
              <Select w={36} value="지수" label="구분" />
            </Group>
            <Select w={55} value="종목변경" label="종목변경" />
            <Group>
              <CodeField $w={23} $px={2} defaultValue="001" aria-label="종목코드" />
              <ToolButton $w={14} aria-label="목록"><ChevronDown size={10} /></ToolButton>
              <ToolButton $w={14} aria-label="검색"><Search size={10} /></ToolButton>
              <ToolButton $w={8} aria-label="다음"><S s={6}><path d="M3 1l6 5l-6 5z" fill="currentColor" /></S></ToolButton>
              <Field $w={140} defaultValue="KOSPI 종합" aria-label="종목명" />
            </Group>
            <Group $mr={3}>{["일", "주", "월", "년", "분", "시", "틱"].map((t, i) => <ToolButton key={t} $w={16} $on={i === 0}>{t}</ToolButton>)}</Group>
            <Group $mr={1}>{[1, 2, 3, 4].map((t) => <ToolButton key={t} $w={16} $on={t === 1}>{t}</ToolButton>)}</Group>
            <Select w={33} value="1" pl={11} label="단위" />
            <Field $w={24} $px={2} $align="right" defaultValue="100" aria-label="표시 개수" />
            <ToolButton $w={13} aria-label="증감"><S s={12}><path d="M3 4.500L6 2l3 2.500M3 7.500L6 10l3-2.500" /></S></ToolButton>
            <Slash>/</Slash>
            <Field $w={26} $px={2} $align="right" defaultValue="500" aria-label="전체 개수" />
            <ToolButton aria-label="새 창"><NewWin /></ToolButton>
            <ToolButton aria-label="저장"><Save size={12} /></ToolButton>
            <Spacer />
            <ToolButton $w={9} aria-label="펼치기"><ChevronsLeftRight size={8} /></ToolButton>
          </Tools>
          <Tools $top={2} $left={3}>
            <Group>
              <ToolButton $w={44}>1 X 1 <Grid3x3 size={10} /></ToolButton>
              <ToolButton $w={18} $on>1x1</ToolButton>
              <ToolButton $w={15} aria-label="배치"><PanelTop size={10} /></ToolButton>
            </Group>
            {["종목", "주기", "기간", "지표"].map((t) => <Group key={t} $mr={1}><ToolButton $w={35} $plain>= {t}</ToolButton></Group>)}
            <ToolButton aria-label="이동"><Move size={11} /></ToolButton>
            <ToolButton><b>₩</b></ToolButton>
            <ToolButton aria-label="이전"><S s={8}><path d="M9 1L3 6l6 5z" fill="currentColor" /></S></ToolButton>
            <ToolButton aria-label="정지"><S s={8}><path d="M2 2h8v8H2z" fill="currentColor" /></S></ToolButton>
            <ToolButton aria-label="다음"><S s={8}><path d="M3 1l6 5l-6 5z" fill="currentColor" /></S></ToolButton>
            <Group $mr={3} />
            <ToolButton $w={36}>초기화</ToolButton>
            <ToolButton $w={45}>보조기능</ToolButton>
            <Select w={65} value="현재가" bg="#dbe6f1" pl={10} label="가격 기준" />
            <DateField $w={54} $px={2} defaultValue="2026/03/05" aria-label="날짜" />
            <ToolButton aria-label="달력"><Calendar size={11} /></ToolButton>
            <Group $mr={2} />
            <ToolButton aria-label="설정"><Settings size={12} /></ToolButton>
            <ToolButton aria-label="지표"><ChartMini /></ToolButton>
          </Tools>
          <Quote>
            <QuotePart $w={58}>KOSPI 종합</QuotePart>
            <QuotePart $w={44} $up>5,601.37</QuotePart>
            <QuotePart $w={9}><UpTriangle s={9} /></QuotePart>
            <QuotePart $w={34} $up>507.83</QuotePart>
            <QuotePart $w={46} $up>(9.97%)</QuotePart>
            <QuotePart $w={58}>1,626,609천</QuotePart>
            <QuotePart $w={58}>시:5,250.92</QuotePart>
            <QuotePart $w={58}><b>고</b>:5,715.30</QuotePart>
            <QuotePart $w={58}><em>저</em>:5,248.13</QuotePart>
            <Spacer />
            <Period>[1일]</Period>
            <MiniButton aria-label="최대화"><S s={8}><path d="M2 2.500h8v7H2zM2 4h8" strokeWidth="2" /></S></MiniButton>
            <MiniButton aria-label="닫기"><X size={8} strokeWidth={3} /></MiniButton>
          </Quote>
          <Charts />
          <ScrollRow>
            <Track />
            <ZoomRange defaultValue={18} aria-label="확대 비율" />
            <ZoomOut size={11} /><ZoomIn size={11} /><ZoomIn size={11} />
          </ScrollRow>
        </ChartWindow>
        <SideTools>
          <hr />
          <ToolStack>{drawTools.map(([icon, more], i) => <DrawTool key={i} $more={more} aria-label={`그리기 도구 ${i + 1}`}>{icon}</DrawTool>)}</ToolStack>
        </SideTools>
      </Body>

      <TabBar $h={19} $line>
        <Grip $r={4} />
        {stockTabs.map(([t, w]) => (
          <Tab key={t} $w={w} $wide><button>{t}</button><button aria-label="탭 닫기"><X size={8} /></button></Tab>
        ))}
        <Spacer />
        <IconButton $w={18} aria-label="더 보기"><ChevronsRight size={11} /></IconButton>
        <IconButton $w={17} aria-label="모두 닫기"><Boxed /></IconButton>
        <IconButton $w={18} aria-label="내보내기"><LogOut size={11} /></IconButton>
      </TabBar>
      <Status>
        <Grip $r={4} />
        <Cell $w={52} $pl={11}>KOSPI</Cell>
        <Cell $w={310}><span>(예상)</span><Up>5,588.16</Up><UpTriangle /><Up>494.62</Up><Up>(9.71%)</Up></Cell>
        <Cell $w={52}>KOSDAQ</Cell>
        <Cell $w={310}><span>(예상)</span><Up>1,114.84</Up><UpTriangle /><Up>136.40</Up><Up>(13.94%)</Up></Cell>
        <Cell $w={363}>[15:28:50]아파트값 더 떨어진 강남·송파·용산…서울 동남권 매수자 우위로(종합)<ChevronUp size={9} /></Cell>
        <Cell>[서울/정규장] PM 03:28:53&nbsp; 2026/3/5 (목)</Cell>
        <Spacer />
        <IconButton $w={15} aria-label="설정"><Wrench size={10} /></IconButton>
        <IconButton $w={15} aria-label="언어"><Globe size={10} /></IconButton>
      </Status>
      <Pointer>
        <svg width="10" height="14" viewBox="0 0 10 14"><path d="M1 1v10l2.500-2l1.500 3.500l2-1l-1.500-3.300H8.500z" fill="#fff" stroke="#222" /></svg>
      </Pointer>
    </Page>
  );
}
